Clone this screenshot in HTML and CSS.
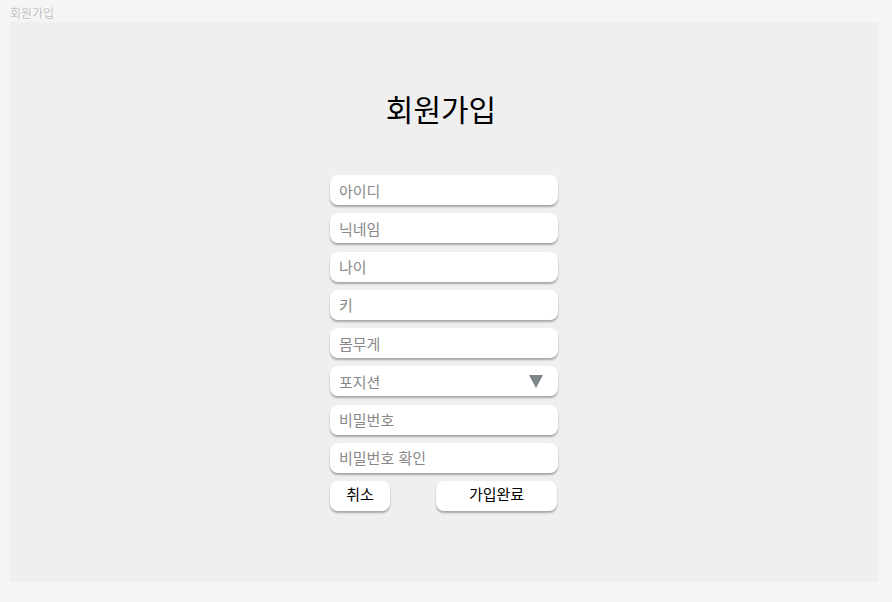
FILE: index.html
```html
<!DOCTYPE html>
<html lang="ko">
<head>
    <meta charset="UTF-8">
    <meta name="viewport" content="width=device-width, initial-scale=1.0">
    <title>회원가입</title>
    <link rel="stylesheet" href="styles.css">
</head>
<body>

    <div class="page-label">회원가입</div>

    <div class="panel">
        <h1 class="title">회원가입</h1>

        <form class="signup-form">
            <input class="field" type="text" placeholder="아이디">
            <input class="field" type="text" placeholder="닉네임">
            <input class="field" type="text" placeholder="나이">
            <input class="field" type="text" placeholder="키">
            <input class="field" type="text" placeholder="몸무게">
            <div class="field select-field">
                <span>포지션</span>
                <span class="arrow"></span>
            </div>
            <input class="field" type="password" placeholder="비밀번호">
            <input class="field" type="password" placeholder="비밀번호 확인">

            <div class="buttons">
                <button type="button" class="btn btn-cancel">취소</button>
                <button type="button" class="btn btn-submit">가입완료</button>
            </div>
        </form>
    </div>

</body>
</html>
```

FILE: styles.css
```css
body {
    font-family: "Noto Sans CJK KR", "Noto Sans", sans-serif;
    background-color: #f5f5f5;
    color: black;
    margin: 0;
    padding: 0;
}

.page-label {
    font-size: 12px;
    font-weight: 300;
    color: #ababab;
    height: 22px;
    line-height: 26px;
    padding-left: 10px;
}

.panel {
    margin-left: 10px;
    width: 868px;
    height: 560px;
    background-color: #efefef;
    display: flex;
    flex-direction: column;
    align-items: center;
}

.title {
    font-size: 30px;
    font-weight: normal;
    margin: 66px 0 0 -6px;
    height: 40px;
    line-height: 40px;
}

.signup-form {
    margin-top: 47px;
    width: 228px;
    display: flex;
    flex-direction: column;
    gap: 8.25px;
}

.field {
    box-sizing: border-box;
    width: 228px;
    height: 30px;
    border: none;
    border-radius: 8px;
    background-color: white;
    box-shadow: 0 2px 2px rgba(0, 0, 0, 0.3);
    padding: 0 9px;
    font-family: inherit;
    font-size: 15px;
    color: #888;
    outline: none;
}

.field::placeholder {
    color: #888;
}

.select-field {
    display: flex;
    align-items: center;
    justify-content: space-between;
}

.arrow {
    width: 0;
    height: 0;
    border-left: 7px solid transparent;
    border-right: 7px solid transparent;
    border-top: 13px solid #7f868a;
    margin-right: 6px;
}

.buttons {
    display: flex;
    justify-content: space-between;
}

.btn {
    height: 30px;
    border: none;
    border-radius: 8px;
    background-color: white;
    box-shadow: 0 2px 2px rgba(0, 0, 0, 0.3);
    font-family: inherit;
    font-size: 15px;
    color: black;
    padding: 0 0 6px 0;
    cursor: pointer;
}

.btn-cancel {
    width: 60px;
}

.btn-submit {
    width: 121px;
    margin-right: 1px;
}
```
